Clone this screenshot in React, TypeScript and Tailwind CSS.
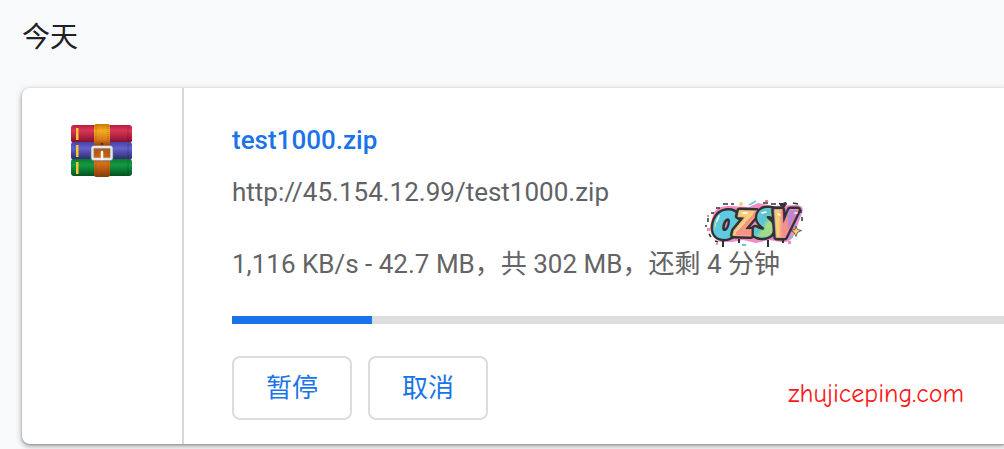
import React from "react";

function ArchiveIcon() {
  return (
    <svg viewBox="0 0 64 56" className="w-16 h-14" role="img" aria-label="zip archive">
      <defs>
        <linearGradient id="red" x1="0" y1="0" x2="0" y2="1">
          <stop offset="0" stopColor="#b51f3c" />
          <stop offset="0.3" stopColor="#dc3555" />
          <stop offset="1" stopColor="#800f2b" />
        </linearGradient>
        <linearGradient id="blue" x1="0" y1="0" x2="0" y2="1">
          <stop offset="0" stopColor="#4444a8" />
          <stop offset="0.35" stopColor="#6461cc" />
          <stop offset="1" stopColor="#282968" />
        </linearGradient>
        <linearGradient id="green" x1="0" y1="0" x2="0" y2="1">
          <stop offset="0" stopColor="#087b2f" />
          <stop offset="0.35" stopColor="#159a43" />
          <stop offset="1" stopColor="#045220" />
        </linearGradient>
        <linearGradient id="strap" x1="0" y1="0" x2="0" y2="1">
          <stop offset="0" stopColor="#c87808" />
          <stop offset="0.13" stopColor="#f3ae20" />
          <stop offset="0.3" stopColor="#d57716" />
          <stop offset="0.38" stopColor="#a94f0a" />
          <stop offset="0.75" stopColor="#d96f16" />
          <stop offset="1" stopColor="#843b0c" />
        </linearGradient>
      </defs>
      <rect x="1" y="1" width="61" height="18" rx="3" fill="url(#red)" />
      <rect x="1" y="18" width="61" height="18" rx="3" fill="url(#blue)" />
      <rect x="1" y="35" width="61" height="17" rx="3" fill="url(#green)" />
      <g fill="#ffc72c">
        <rect x="6" y="4" width="2.5" height="12" />
        <rect x="6" y="21" width="2.5" height="12" />
        <rect x="6" y="38" width="2.5" height="12" />
      </g>
      <path d="M58 3v14M58 20v14M58 37v13" stroke="#000" strokeOpacity="0.2" />
      <path d="M24 3q0-3 2-3h12q2 0 2 3v49q-1 1-3 1H27q-2 0-3-1z" fill="url(#strap)" />
      <path d="M26 2v49M38 2v49" stroke="#8b4211" strokeOpacity="0.5" strokeDasharray="1 1" />
      <circle cx="32" cy="20" r="1.5" fill="#633008" />
      <rect x="22.5" y="23.5" width="19" height="12" rx="1.5" fill="none" stroke="#777" strokeWidth="3.5" />
      <rect x="22.5" y="23" width="19" height="12" rx="1.5" fill="none" stroke="#e8e8e8" strokeWidth="2.3" />
      <path d="M32 28v7" stroke="#fff" strokeWidth="2.5" strokeLinecap="round" />
    </svg>
  );
}

const letters = [
  { char: "O", x: 17, y: 42, size: 36, fill: "url(#letter-o)", edge: "#5ecbe0", rotate: 2 },
  { char: "Z", x: 40, y: 40, size: 34, fill: "url(#letter-z)", edge: "#f5b184", rotate: 2 },
  { char: "S", x: 59, y: 41, size: 38, fill: "url(#letter-s)", edge: "#72cbbd", rotate: 2 },
  { char: "V", x: 77, y: 42, size: 37, fill: "url(#letter-v)", edge: "#e795ab", rotate: 0 },
];

function GraffitiLogo() {
  return (
    <svg viewBox="0 0 120 60" className="w-[120px] h-[60px]" role="img" aria-label="OZSV">
      <defs>
        <linearGradient id="letter-o" x1="0" y1="0" x2="1" y2="0.4">
          <stop offset="0.2" stopColor="#5ecbe0" />
          <stop offset="0.2" stopColor="#c9dc9c" />
          <stop offset="0.3" stopColor="#c9dc9c" />
          <stop offset="0.3" stopColor="#5ecbe0" />
        </linearGradient>
        <linearGradient id="letter-z" x1="0" y1="0" x2="0.6" y2="1">
          <stop offset="0.3" stopColor="#f391bb" />
          <stop offset="0.3" stopColor="#f9d078" />
          <stop offset="0.6" stopColor="#f9d078" />
          <stop offset="0.6" stopColor="#f5928c" />
        </linearGradient>
        <linearGradient id="letter-s" x1="0" y1="0" x2="0.7" y2="1">
          <stop offset="0.55" stopColor="#5dc5d1" />
          <stop offset="0.65" stopColor="#a5db85" />
        </linearGradient>
        <linearGradient id="letter-v" x1="0" y1="0" x2="1" y2="0">
          <stop offset="0.25" stopColor="#f9ce72" />
          <stop offset="0.4" stopColor="#f48f89" />
          <stop offset="0.6" stopColor="#f48f89" />
          <stop offset="0.6" stopColor="#bd85d5" />
        </linearGradient>
      </defs>
      <path
        d="M19 17q5-7 16-6l19 1 9-4 14 3 25-1q8 1 5 8l-8 22q-3 8-13 7l-12-2-13 3-13-3-11 2H25q-8-4-10-15z"
        fill="#f08cc5"
      />
      <path d="M28 45v7M44 44v4M73 45v7M88 43v5" stroke="#303035" strokeWidth="2" />
      <g
        className="font-['Open_Sans','Noto_Sans',sans-serif] font-extrabold italic"
        strokeLinejoin="round"
        paintOrder="stroke"
      >
        {letters.map((l) => (
          <g key={l.char} transform={`rotate(${l.rotate} ${l.x} ${l.y})`} fontSize={l.size}>
            <text x={l.x} y={l.y} fill="#303035" stroke="#303035" strokeWidth="7" aria-hidden="true">
              {l.char}
            </text>
            <text x={l.x} y={l.y} fill={l.fill} stroke={l.edge} strokeWidth="2">
              {l.char}
            </text>
          </g>
        ))}
      </g>
      <path d="M22 26l2-5M48 18h4M67 18l4-1M83 19l2 1M100 18h2" stroke="#fff" strokeWidth="1.5" strokeLinecap="round" />
      <path d="M54 10l7-4" stroke="#70cddd" strokeWidth="2" />
      <path
        d="M13 23v4M16 18h3M21 13h4M28 9h5M11 30v2M14 39l2 3M20 46l3 1M36 9h3M68 8h5M76 9h5M98 8l5 1M106 15v3M107 22v4"
        stroke="#333338"
        strokeWidth="1.5"
      />
      <path d="M84 9q-1-2 2-1h2l2-1q2 0 2 2l-3 4h-2z" fill="#333338" />
      <circle cx="46" cy="9" r="2" fill="#f8ce78" />
      <g fill="#ef91bd">
        <rect x="12" y="33" width="3" height="3" />
        <rect x="21" y="48" width="2" height="2" />
        <rect x="93" y="46" width="3" height="3" />
      </g>
      <path d="M12 20h2v2h-2zM70 5h3v2h-3z" fill="#f58172" />
      <path d="M47 49h4v2h-4zM95 41h3v2h-3z" fill="#61cadc" />
      <path d="M101 31l1.5 3.5 4 1-4 2-1.5 4-2-4-3-2 4-1z" fill="#ffd064" stroke="#333338" strokeWidth="0.7" />
    </svg>
  );
}

function ActionButton({ children }: { children: React.ReactNode }) {
  return (
    <button
      type="button"
      className="w-[120px] h-16 rounded-lg border-2 border-[#dadce0] bg-white text-[#1a73e8] text-[26px] leading-8 hover:bg-blue-50"
    >
      {children}
    </button>
  );
}

function DownloadItem() {
  const percent = 18.1;

  return (
    <article className="relative flex ml-[22px] bg-white rounded-l-lg shadow-[0_2px_5px_1px_rgba(60,64,67,0.35),0_1px_2px_rgba(60,64,67,0.35)]">
      <div className="w-[162px] shrink-0 pt-9 flex justify-center items-start border-r-2 border-[#d8d8d8]">
        <ArchiveIcon />
      </div>
      <div className="flex-1 min-w-0 pt-9 pb-6 pl-12 text-[26px] leading-8 text-[#5f6368]">
        <a href="#test1000" className="block w-fit font-medium text-[#1a73e8]">
          test1000.zip
        </a>
        <a href="http://45.154.12.99/test1000.zip" className="block w-fit mt-5">
          http://45.154.12.99/test1000.zip
        </a>
        <p className="mt-10 text-[#646464]">1,116 KB/s - 42.7 MB，共 302 MB，还剩 4 分钟</p>
        <div
          role="progressbar"
          aria-label="test1000.zip"
          aria-valuenow={percent}
          className="mt-9 h-2 bg-[#dddddd]"
        >
          <div className="h-full bg-[#1a73e8]" style={{ width: `${percent}%` }} />
        </div>
        <div className="mt-8 flex items-center gap-4">
          <ActionButton>暂停</ActionButton>
          <ActionButton>取消</ActionButton>
          <span className="ml-auto mr-10 mt-3 text-[26px] font-medium text-[#fb1718] font-['Comic_Sans_MS','Comic_Neue',cursive]">
            zhujiceping.com
          </span>
        </div>
      </div>
      <div className="absolute left-[673px] top-[107px] pointer-events-none">
        <GraffitiLogo />
      </div>
    </article>
  );
}

export default function App() {
  return (
    <main className="min-h-screen overflow-hidden bg-[#f8f9fb] pb-1 font-['Roboto','Noto_Sans_CJK_SC',sans-serif]">
      <h1 className="pl-[22px] pt-[22px] pb-[34px] text-[28px] leading-8 text-[#202124]">今天</h1>
      <DownloadItem />
    </main>
  );
}
